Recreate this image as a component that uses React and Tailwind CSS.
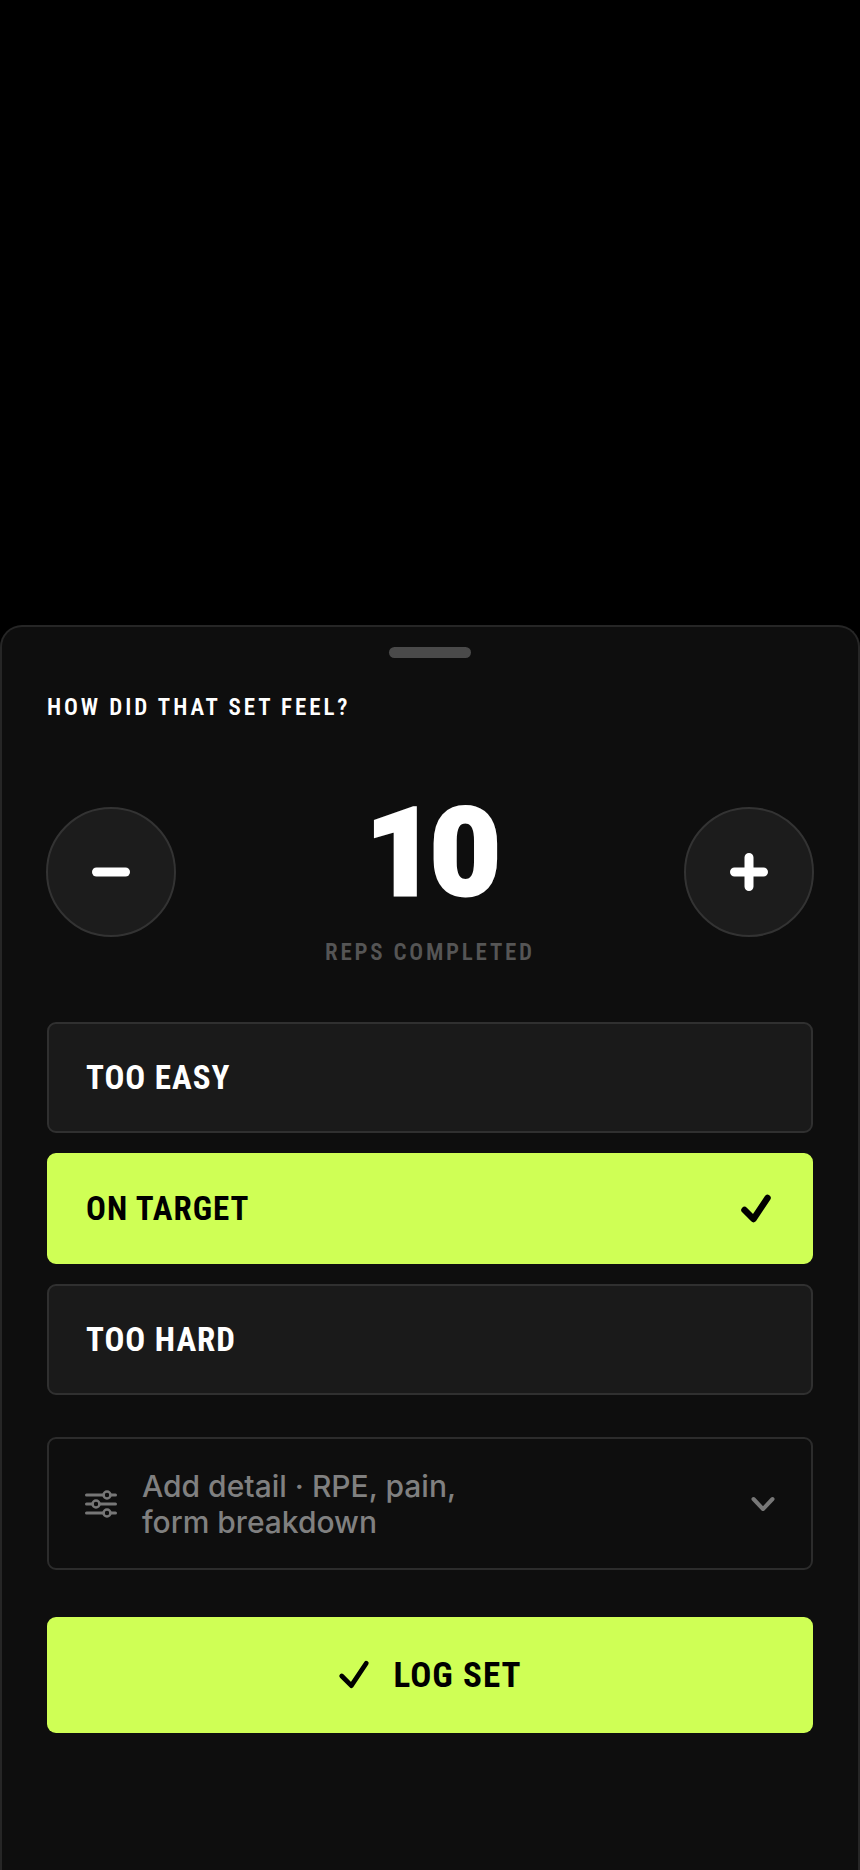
import { useState } from 'react';

const condensed = "font-['Roboto_Condensed','Liberation_Sans_Narrow',Roboto,sans-serif] [font-stretch:75%]";

function StepButton({ label, onClick, children }) {
  return (
    <button
      aria-label={label}
      onClick={onClick}
      className="flex h-[130px] w-[130px] shrink-0 items-center justify-center rounded-full border-2 border-[#333] bg-[#1c1c1c]"
    >
      {children}
    </button>
  );
}

function Check({ size, width }) {
  return (
    <svg width={size} height={size} viewBox="0 0 30 30" fill="none" stroke="#000" strokeWidth={width} strokeLinecap="round" strokeLinejoin="round">
      <path d="M3.5 16 12.5 25 26.5 4" />
    </svg>
  );
}

function FeelOption({ label, active, onClick }) {
  return (
    <button
      onClick={onClick}
      className={`flex h-[111px] w-full items-center justify-between rounded-[9px] border-2 pl-[37px] pr-[40px] ${
        active ? 'border-[#cfff55] bg-[#cfff55] text-black' : 'border-[#303030] bg-[#1a1a1a] text-white'
      }`}
    >
      <span className={`${condensed} text-[33px] font-bold leading-none tracking-[0.03em]`}>{label}</span>
      {active && <Check size={30} width={6.5} />}
    </button>
  );
}

export default function App() {
  const [reps, setReps] = useState(10);
  const [feel, setFeel] = useState('ON TARGET');

  return (
    <div className="min-h-[1870px] bg-black pt-[625px]">
      {/* Sheet */}
      <div className="h-[1245px] rounded-t-[22px] border-x-2 border-t-2 border-[#262626] bg-[#0e0e0e] px-[45px]">
        <div className="flex justify-center pt-[20px]">
          <div className="h-[11px] w-[82px] rounded-full bg-[#4a4a4a]" />
        </div>

        <p className={`${condensed} mt-[33px] text-[23px] font-semibold leading-[34px] tracking-[0.127em] text-white`}>
          HOW DID THAT SET FEEL?
        </p>

        {/* Reps stepper */}
        <div className="-mx-px mt-[82px] flex items-start justify-between">
          <StepButton label="Fewer reps" onClick={() => setReps(reps - 1)}>
            <svg width="38" height="38" viewBox="0 0 38 38" fill="none" stroke="#fff" strokeWidth="9" strokeLinecap="round">
              <path d="M4.5 19h29" />
            </svg>
          </StepButton>
          <div className="-mt-[9px] flex flex-col items-center">
            <span className="font-['Roboto',sans-serif] text-[122px] font-black leading-[112px] tracking-[-0.05em] text-white [-webkit-text-stroke:3px_white]">
              {reps}
            </span>
            <span className={`${condensed} mt-[28px] text-[23px] font-semibold leading-[30px] tracking-[0.12em] text-[#555]`}>
              REPS COMPLETED
            </span>
          </div>
          <StepButton label="More reps" onClick={() => setReps(reps + 1)}>
            <svg width="38" height="38" viewBox="0 0 38 38" fill="none" stroke="#fff" strokeWidth="9" strokeLinecap="round">
              <path d="M4.5 19h29M19 4.5v29" />
            </svg>
          </StepButton>
        </div>

        {/* Feel options */}
        <div className="mt-[54px] flex flex-col gap-[20px]">
          {['TOO EASY', 'ON TARGET', 'TOO HARD'].map((item) => (
            <FeelOption key={item} label={item} active={feel === item} onClick={() => setFeel(item)} />
          ))}
        </div>

        {/* Detail row */}
        <button className="mt-[42px] flex h-[133px] w-full items-center rounded-[9px] border-2 border-[#2c2c2c] pl-[36px] pr-[36px] text-left">
          <svg width="32" height="28" viewBox="0 0 32 28" fill="none" stroke="#777" strokeWidth="3" strokeLinecap="round" className="shrink-0">
            <path d="M1.5 5h17M25.5 5h5M1.5 14h6M14.5 14h16M1.5 23h17M25.5 23h5" />
            <circle cx="22" cy="5" r="3.5" strokeWidth="2.5" />
            <circle cx="11" cy="14" r="3.5" strokeWidth="2.5" />
            <circle cx="22" cy="23" r="3.5" strokeWidth="2.5" />
          </svg>
          <span className="ml-[25px] flex-1 font-['Inter',sans-serif] text-[30px] font-medium leading-[36px] text-[#808080]">
            Add detail · RPE, pain,
            <br />
            form breakdown
          </span>
          <svg width="24" height="16" viewBox="0 0 24 16" fill="none" stroke="#777" strokeWidth="4" strokeLinecap="round" strokeLinejoin="round" className="shrink-0">
            <path d="M2.5 3 12 13 21.5 3" />
          </svg>
        </button>

        {/* Log set */}
        <button className="mt-[47px] flex h-[116px] w-full items-center justify-center gap-[23px] rounded-[9px] bg-[#cfff55] text-black">
          <Check size={32} width={4.5} />
          <span className={`${condensed} text-[35px] font-bold leading-none tracking-[0.03em]`}>LOG SET</span>
        </button>
      </div>
    </div>
  );
}
